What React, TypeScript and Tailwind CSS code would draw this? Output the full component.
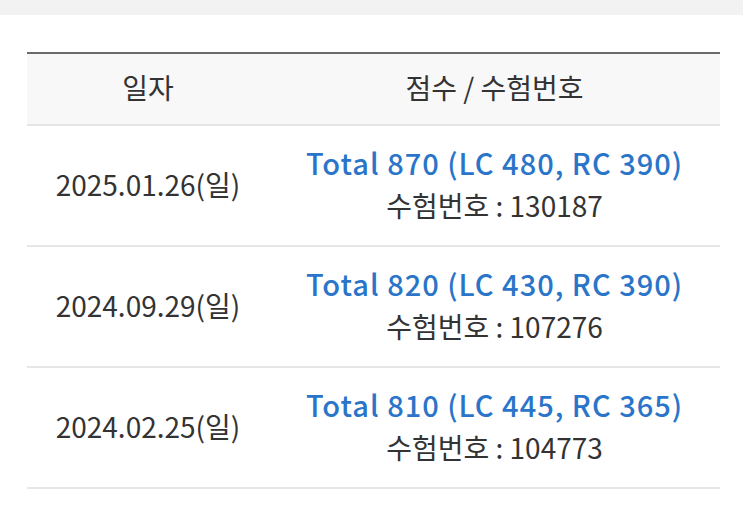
const rows = [
  { date: "2025.01.26(일)", total: 870, lc: 480, rc: 390, no: "130187" },
  { date: "2024.09.29(일)", total: 820, lc: 430, rc: 390, no: "107276" },
  { date: "2024.02.25(일)", total: 810, lc: 445, rc: 365, no: "104773" },
];

export default function App() {
  return (
    <div
      className="min-h-screen bg-white text-[#333]"
      style={{ fontFamily: '"Noto Sans CJK KR", "Noto Sans", sans-serif' }}
    >
      <div className="h-[15px] bg-[#f2f2f2]" />
      <table className="mt-[37px] ml-[27px] w-[693px] border-collapse text-[28px]">
        <thead>
          <tr className="bg-[#f8f8f8] border-t-[2px] border-t-[#6b6b6b] border-b-[2px] border-b-[#e6e6e6]">
            <th className="w-[242px] h-[72px] pb-[4px] font-normal text-center">일자</th>
            <th className="pb-[4px] font-normal text-center">점수 / 수험번호</th>
          </tr>
        </thead>
        <tbody>
          {rows.map((r) => (
            <tr key={r.no} className="border-b-[2px] border-b-[#e6e6e6]">
              <td className="h-[121px] pb-[4px] text-center">{r.date}</td>
              <td className="pb-[4px] text-center leading-[43px]">
                <div className="text-[29px] tracking-[1px] text-[#2a75c9] font-medium">
                  Total {r.total} (LC {r.lc}, RC {r.rc})
                </div>
                <div>수험번호 : {r.no}</div>
              </td>
            </tr>
          ))}
        </tbody>
      </table>
    </div>
  );
}
